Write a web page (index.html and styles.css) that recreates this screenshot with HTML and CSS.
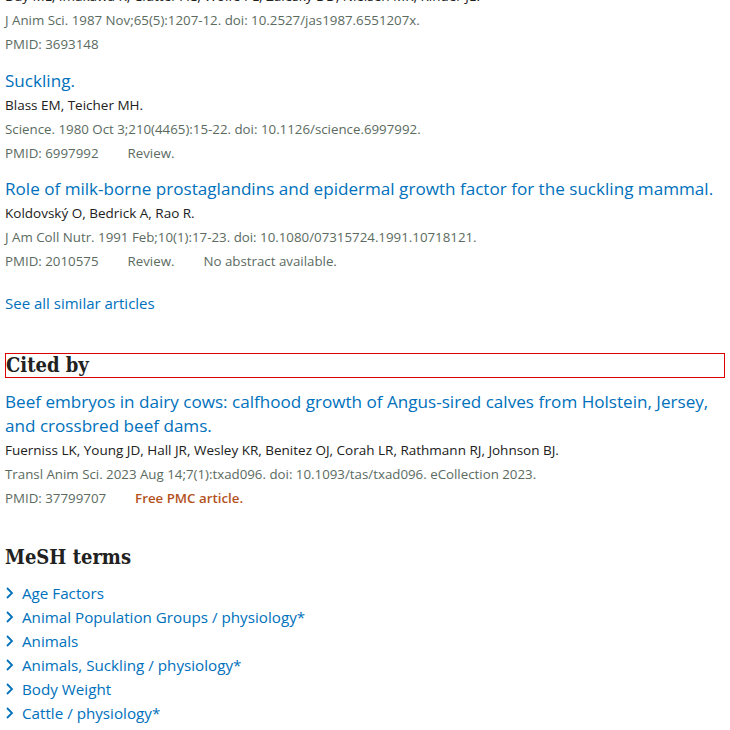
FILE: index.html
```html
<!DOCTYPE html>
<html>
<head>
<meta charset="utf-8">
<link rel="stylesheet" href="styles.css">
</head>
<body>
<div class="page">
  <section class="similar">
    <article class="docsum first">
      <div class="authors">Day ML, Imakawa K, Clutter AC, Wolfe PL, Zalesky DD, Nielsen MK, Kinder JE.</div>
      <div class="citation">J Anim Sci. 1987 Nov;65(5):1207-12. doi: 10.2527/jas1987.6551207x.</div>
      <div class="meta"><span>PMID: 3693148</span></div>
    </article>
    <article class="docsum">
      <a class="title" href="#">Suckling.</a>
      <div class="authors">Blass EM, Teicher MH.</div>
      <div class="citation">Science. 1980 Oct 3;210(4465):15-22. doi: 10.1126/science.6997992.</div>
      <div class="meta"><span>PMID: 6997992</span><span>Review.</span></div>
    </article>
    <article class="docsum">
      <a class="title" href="#">Role of milk-borne prostaglandins and epidermal growth factor for the suckling mammal.</a>
      <div class="authors">Koldovský O, Bedrick A, Rao R.</div>
      <div class="citation">J Am Coll Nutr. 1991 Feb;10(1):17-23. doi: 10.1080/07315724.1991.10718121.</div>
      <div class="meta"><span>PMID: 2010575</span><span>Review.</span><span>No abstract available.</span></div>
    </article>
    <a class="see-all" href="#">See all similar articles</a>
  </section>

  <section class="cited">
    <h2 class="heading boxed">Cited by</h2>
    <article class="docsum">
      <a class="title" href="#">Beef embryos in dairy cows: calfhood growth of Angus-sired calves from Holstein, Jersey, and crossbred beef dams.</a>
      <div class="authors">Fuerniss LK, Young JD, Hall JR, Wesley KR, Benitez OJ, Corah LR, Rathmann RJ, Johnson BJ.</div>
      <div class="citation">Transl Anim Sci. 2023 Aug 14;7(1):txad096. doi: 10.1093/tas/txad096. eCollection 2023.</div>
      <div class="meta"><span>PMID: 37799707</span><span class="free">Free PMC article.</span></div>
    </article>
  </section>

  <section class="mesh">
    <h2 class="heading">MeSH terms</h2>
    <ul class="terms">
      <li><svg class="chev" viewBox="0 0 10 14" width="10" height="14"><path d="M2 2 L7 7 L2 12" fill="none" stroke="#0071bc" stroke-width="1.8"/></svg><a href="#">Age Factors</a></li>
      <li><svg class="chev" viewBox="0 0 10 14" width="10" height="14"><path d="M2 2 L7 7 L2 12" fill="none" stroke="#0071bc" stroke-width="1.8"/></svg><a href="#">Animal Population Groups / physiology*</a></li>
      <li><svg class="chev" viewBox="0 0 10 14" width="10" height="14"><path d="M2 2 L7 7 L2 12" fill="none" stroke="#0071bc" stroke-width="1.8"/></svg><a href="#">Animals</a></li>
      <li><svg class="chev" viewBox="0 0 10 14" width="10" height="14"><path d="M2 2 L7 7 L2 12" fill="none" stroke="#0071bc" stroke-width="1.8"/></svg><a href="#">Animals, Suckling / physiology*</a></li>
      <li><svg class="chev" viewBox="0 0 10 14" width="10" height="14"><path d="M2 2 L7 7 L2 12" fill="none" stroke="#0071bc" stroke-width="1.8"/></svg><a href="#">Body Weight</a></li>
      <li><svg class="chev" viewBox="0 0 10 14" width="10" height="14"><path d="M2 2 L7 7 L2 12" fill="none" stroke="#0071bc" stroke-width="1.8"/></svg><a href="#">Cattle / physiology*</a></li>
    </ul>
  </section>
</div>
</body>
</html>
```

FILE: styles.css
```css
html, body {
  margin: 0;
  padding: 0;
  background: #fff;
}
body {
  font-family: "Open Sans", "Noto Sans", sans-serif;
  color: #212121;
  overflow: hidden;
}
a { text-decoration: none; color: #0071bc; }
.page {
  padding: 0 5px;
  margin-top: -16px;
}
.docsum {
  display: flex;
  flex-direction: column;
  margin-bottom: 12px;
}
.docsum.first { margin-bottom: 13px; }
.title {
  font-size: 17.1px;
  line-height: 24px;
  color: #0071bc;
}
.authors {
  font-size: 13.5px;
  line-height: 24px;
  color: #212121;
}
.citation, .meta {
  font-size: 13.3px;
  line-height: 24px;
  color: #5b6b5f;
}
.meta {
  display: flex;
  gap: 29px;
}
.free {
  color: #b4521e;
  font-weight: 600;
}
.see-all {
  display: block;
  font-size: 15px;
  line-height: 24px;
  margin-top: 18px;
}
.heading {
  font-family: "DejaVu Serif", serif;
  font-stretch: condensed;
  font-weight: bold;
  font-size: 20px;
  line-height: 22px;
  margin: 0;
  color: #212121;
}
.boxed {
  border: 1px solid #d00;
  line-height: 23px;
  margin-top: 38px;
  margin-bottom: 12px;
}
.mesh .heading {
  margin-top: 36px;
  margin-bottom: 13px;
}
.terms {
  list-style: none;
  margin: 0;
  padding: 0;
}
.terms li {
  display: flex;
  align-items: center;
  gap: 7px;
  font-size: 15.2px;
  line-height: 24px;
}
.chev { flex: none; }
```
